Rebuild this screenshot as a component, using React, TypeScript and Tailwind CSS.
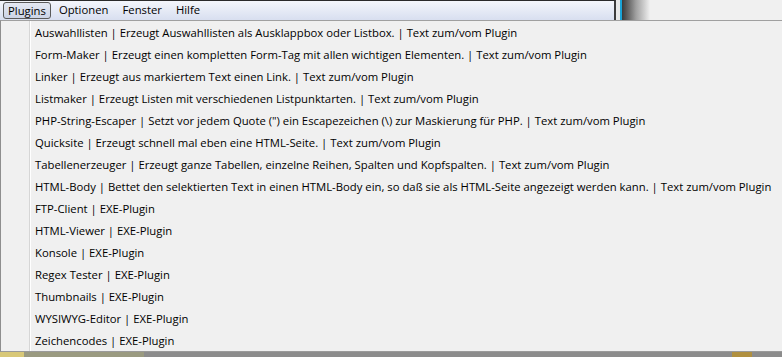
const items = [
  "Auswahllisten | Erzeugt Auswahllisten als Ausklappbox oder Listbox. | Text zum/vom Plugin",
  "Form-Maker | Erzeugt einen kompletten Form-Tag mit allen wichtigen Elementen. | Text zum/vom Plugin",
  "Linker | Erzeugt aus markiertem Text einen Link. | Text zum/vom Plugin",
  "Listmaker | Erzeugt Listen mit verschiedenen Listpunktarten. | Text zum/vom Plugin",
  "PHP-String-Escaper | Setzt vor jedem Quote (\") ein Escapezeichen (\\) zur Maskierung für PHP. | Text zum/vom Plugin",
  "Quicksite | Erzeugt schnell mal eben eine HTML-Seite. | Text zum/vom Plugin",
  "Tabellenerzeuger | Erzeugt ganze Tabellen, einzelne Reihen, Spalten und Kopfspalten. | Text zum/vom Plugin",
  "HTML-Body | Bettet den selektierten Text in einen HTML-Body ein, so daß sie als HTML-Seite angezeigt werden kann. | Text zum/vom Plugin",
  "FTP-Client | EXE-Plugin",
  "HTML-Viewer | EXE-Plugin",
  "Konsole | EXE-Plugin",
  "Regex Tester | EXE-Plugin",
  "Thumbnails | EXE-Plugin",
  "WYSIWYG-Editor | EXE-Plugin",
  "Zeichencodes | EXE-Plugin",
];

const menus = ["Plugins", "Optionen", "Fenster", "Hilfe"];

export default function App() {
  return (
    <div className="w-[782px] h-[357px] overflow-hidden bg-[#f0f0f0] text-[11.3px] text-black font-['Open_Sans','Noto_Sans',sans-serif]">
      {/* menu bar + window edge */}
      <div className="flex h-[20px]">
        <div className="w-[616px] shrink-0 flex items-end pb-[1px] gap-[2px] pl-[3px] border-t border-[#2a2a2a] border-r-2 border-r-[#3c3c3c] bg-gradient-to-b from-[#f4f6fb] to-[#d8dff0]">
          {menus.map((m, i) => (
            <span
              key={m}
              className={
                i === 0
                  ? "h-[17px] leading-[15px] px-[4px] rounded-[3px] border border-[#5a5a5a] bg-gradient-to-b from-[#e4e8f2] to-[#ccd4e6]"
                  : "h-[17px] leading-[15px] px-[6px]"
              }
            >
              {m}
            </span>
          ))}
        </div>
        <div className="w-[4px] shrink-0 bg-[#e8e8e8]" />
        <div className="w-[2px] shrink-0 bg-[#1aa3d6]" />
        <div className="w-[28px] shrink-0 bg-gradient-to-r from-[#3a3a3a] via-[#a0a0a0] to-[#f0f0f0]" />
      </div>

      {/* dropdown */}
      <div className="flex h-[332px] border-t border-[#a0a0a0] border-l border-l-[#8e8e8e] border-b border-b-[#9a9a9a] bg-[#f0f0f0]">
        <div className="w-[29px] shrink-0 border-r border-[#d6d6d6] shadow-[1px_0_0_#ffffff]" />
        <div className="flex flex-col pt-[1px] pl-[5px] min-w-0">
          {items.map((t) => (
            <div key={t} className="h-[22px] leading-[22px] whitespace-nowrap">
              {t}
            </div>
          ))}
        </div>
      </div>

      {/* background behind */}
      <div className="flex h-[5px] bg-[#8c8c8c]">
        <div className="w-[24px] bg-[#d8c878]" />
        <div className="w-[120px] bg-[#9a9a80]" />
        <div className="flex-1" />
        <div className="w-[20px] bg-[#b09040]" />
        <div className="w-[30px]" />
      </div>
    </div>
  );
}
